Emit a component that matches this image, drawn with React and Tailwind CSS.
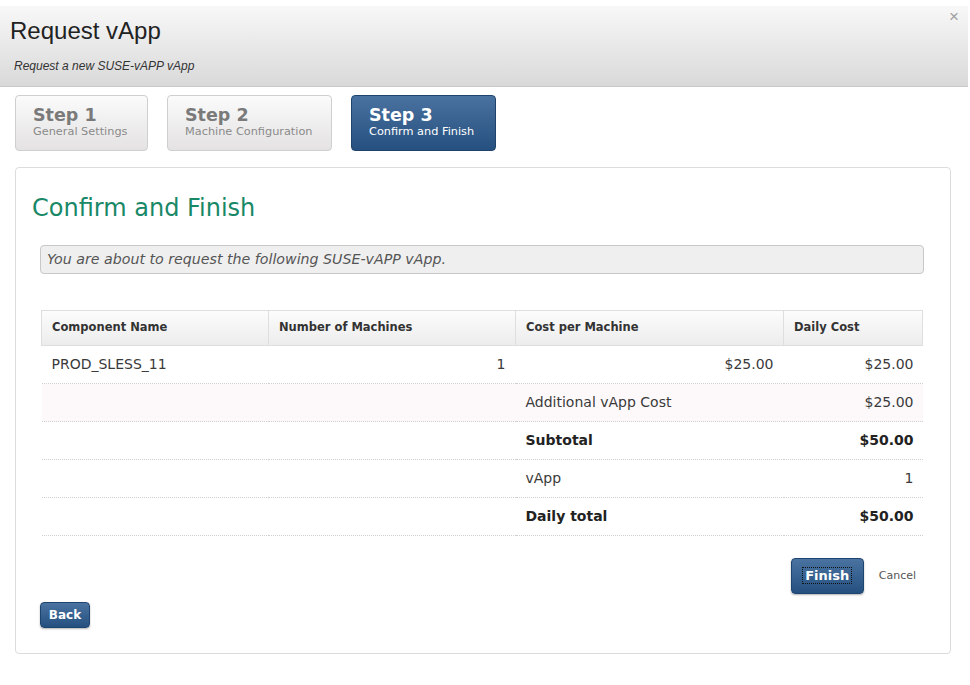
import React from 'react';

const verdana = { fontFamily: '"DejaVu Sans", Verdana, sans-serif' };
const arial = { fontFamily: '"Liberation Sans", Arial, sans-serif' };

function StepTab({ num, label, active, width }) {
  return (
    <div
      className={`h-[56px] rounded-[4px] border px-[17px] pt-[9px] ${width} ${
        active
          ? 'border-[#20436b] bg-gradient-to-b from-[#4a72a0] to-[#25507f] text-white'
          : 'border-[#cfcfcf] bg-gradient-to-b from-[#fbfbfb] to-[#e4e2e3] text-[#7a7a7a]'
      }`}
    >
      <div className="text-[17.5px] font-bold leading-[20px]">Step {num}</div>
      <div className={`text-[11.3px] leading-[14px] ${active ? 'text-white' : 'text-[#8a8a8a]'}`}>{label}</div>
    </div>
  );
}

export default function App() {
  const rows = [
    { a: 'PROD_SLESS_11', b: '1', c: '$25.00', d: '$25.00', alt: false },
    { a: '', b: '', c: 'Additional vApp Cost', d: '$25.00', alt: true, left: true },
    { a: '', b: '', c: 'Subtotal', d: '$50.00', alt: false, left: true, bold: true },
    { a: '', b: '', c: 'vApp', d: '1', alt: false, left: true },
    { a: '', b: '', c: 'Daily total', d: '$50.00', alt: false, left: true, bold: true },
  ];

  return (
    <div className="w-[970px] h-[685px] bg-white overflow-hidden" style={verdana}>
      {/* header */}
      <div className="mt-[6px] h-[81px] w-[968px] border-b border-[#c9c9c9] bg-gradient-to-b from-[#f8f8f8] to-[#d9d9d9] relative">
        <div className="pl-[10px] pt-[12px] text-[24px] leading-[26px] text-[#222]" style={arial}>
          Request vApp
        </div>
        <div className="pl-[14px] pt-[15px] text-[12px] italic text-[#333] leading-[14px]" style={arial}>
          Request a new SUSE-vAPP vApp
        </div>
        <span className="absolute right-[9px] top-[-2px] text-[17px] text-[#a0a0a0]" style={arial}>
          ×
        </span>
      </div>

      {/* steps */}
      <div className="flex gap-[19px] pl-[15px] pt-[8px]">
        <StepTab num={1} label="General Settings" width="w-[133px]" />
        <StepTab num={2} label="Machine Configuration" width="w-[165px]" />
        <StepTab num={3} label="Confirm and Finish" width="w-[145px]" active />
      </div>

      {/* panel */}
      <div className="ml-[15px] mt-[16px] w-[936px] h-[487px] rounded-[4px] border border-[#dcdcdc] px-[24px]">
        <h2 className="ml-[-8px] mt-[25px] text-[24px] leading-[30px] text-[#188867]">Confirm and Finish</h2>

        <div className="mt-[22px] h-[29px] w-[884px] rounded-[4px] border border-[#c8c8c8] bg-[#efefef] pl-[6px] text-[14.2px] italic leading-[27px] text-[#555]">
          You are about to request the following SUSE-vAPP vApp.
        </div>

        <table className="ml-[1px] mt-[36px] w-[882px] border-collapse text-[14px] text-[#3a3a3a]">
          <thead>
            <tr className="h-[35px] bg-gradient-to-b from-[#fcfcfc] to-[#ececec] text-left text-[11.5px] font-bold text-[#333]">
              <th className="w-[227px] border border-[#dedede] pl-[10px] font-bold">Component Name</th>
              <th className="w-[247px] border border-[#dedede] pl-[10px] font-bold">Number of Machines</th>
              <th className="w-[268px] border border-[#dedede] pl-[10px] font-bold">Cost per Machine</th>
              <th className="border border-[#dedede] pl-[10px] font-bold">Daily Cost</th>
            </tr>
          </thead>
          <tbody>
            {rows.map((r, i) => (
              <tr key={i} className={`h-[38px] border-b border-dotted border-[#cfcfcf] ${r.alt ? 'bg-[#fdf9fb]' : 'bg-white'}`}>
                <td className="pl-[10px]">{r.a}</td>
                <td className="pr-[10px] text-right">{r.b}</td>
                <td className={`${r.left ? 'pl-[10px] text-left' : 'pr-[10px] text-right'} ${r.bold ? 'font-bold text-[#222]' : ''}`}>{r.c}</td>
                <td className={`pr-[9px] text-right ${r.bold ? 'font-bold text-[#222]' : ''}`}>{r.d}</td>
              </tr>
            ))}
          </tbody>
        </table>

        <div className="mt-[22px] flex items-center justify-end gap-[15px] pr-[10px]">
          <button className="h-[36px] w-[73px] rounded-[4px] border border-[#1e4470] bg-gradient-to-b from-[#4a73a1] to-[#24507f] text-[13px] font-bold text-white shadow-[0_1px_2px_rgba(0,0,0,0.3)]">
            <span className="outline-dotted outline-1 outline-[#111] px-[2px]">Finish</span>
          </button>
          <span className="text-[11px] text-[#555]">Cancel</span>
        </div>

        <button className="mt-[8px] h-[26px] w-[50px] rounded-[4px] border border-[#1e4470] bg-gradient-to-b from-[#4a73a1] to-[#24507f] text-[12px] font-bold text-white shadow-[0_1px_2px_rgba(0,0,0,0.3)]">
          Back
        </button>
      </div>
    </div>
  );
}
